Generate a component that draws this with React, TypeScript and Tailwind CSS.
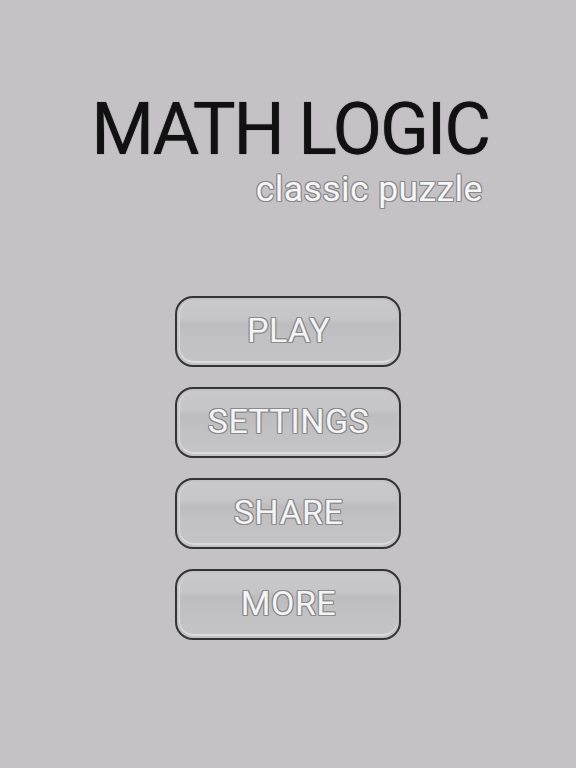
import React from "react";

const outline =
  "[text-shadow:1px_0_0_#8a898c,-1px_0_0_#8a898c,0_1px_0_#8a898c,0_-1px_0_#8a898c,1px_1px_0_#8a898c,-1px_-1px_0_#8a898c,1px_-1px_0_#8a898c,-1px_1px_0_#8a898c]";

function MenuButton({ label }: { label: string }) {
  return (
    <button className="w-[226px] h-[71px] rounded-[18px] border-2 border-[#343434] bg-[#c3c2c4] p-[2px]">
      <div className="h-full w-full rounded-[15px] border-b-2 border-l border-[#dcdbdd] bg-[linear-gradient(to_bottom,#c9c8ca_0%,#c6c5c7_30%,#bdbcbe_40%,#c1c0c2_60%,#c4c3c5_100%)] flex items-center justify-center">
        <span
          className={`text-[34px] leading-none text-[#f4f4f4] tracking-[0.5px] ${outline}`}
          style={{ fontFamily: "Roboto, 'Noto Sans', sans-serif" }}
        >
          {label}
        </span>
      </div>
    </button>
  );
}

export default function App() {
  return (
    <div
      className="w-[576px] h-[768px] bg-[#c4c2c5] flex flex-col items-center"
      style={{ fontFamily: "Roboto, 'Noto Sans', sans-serif" }}
    >
      <div className="mt-[94px] flex flex-col items-end pl-[4px]">
        <h1 className="text-[72px] leading-none text-[#111111] tracking-[-2.2px] [text-shadow:0_0_1px_#333]">
          MATH LOGIC
        </h1>
        <div
          className={`mr-[6px] mt-[6px] text-[35.5px] leading-none text-[#f6f6f6] tracking-[0.4px] ${outline}`}
        >
          classic puzzle
        </div>
      </div>
      <div className="mt-[88px] flex flex-col items-center gap-[20px]">
        <MenuButton label="PLAY" />
        <MenuButton label="SETTINGS" />
        <MenuButton label="SHARE" />
        <MenuButton label="MORE" />
      </div>
    </div>
  );
}
